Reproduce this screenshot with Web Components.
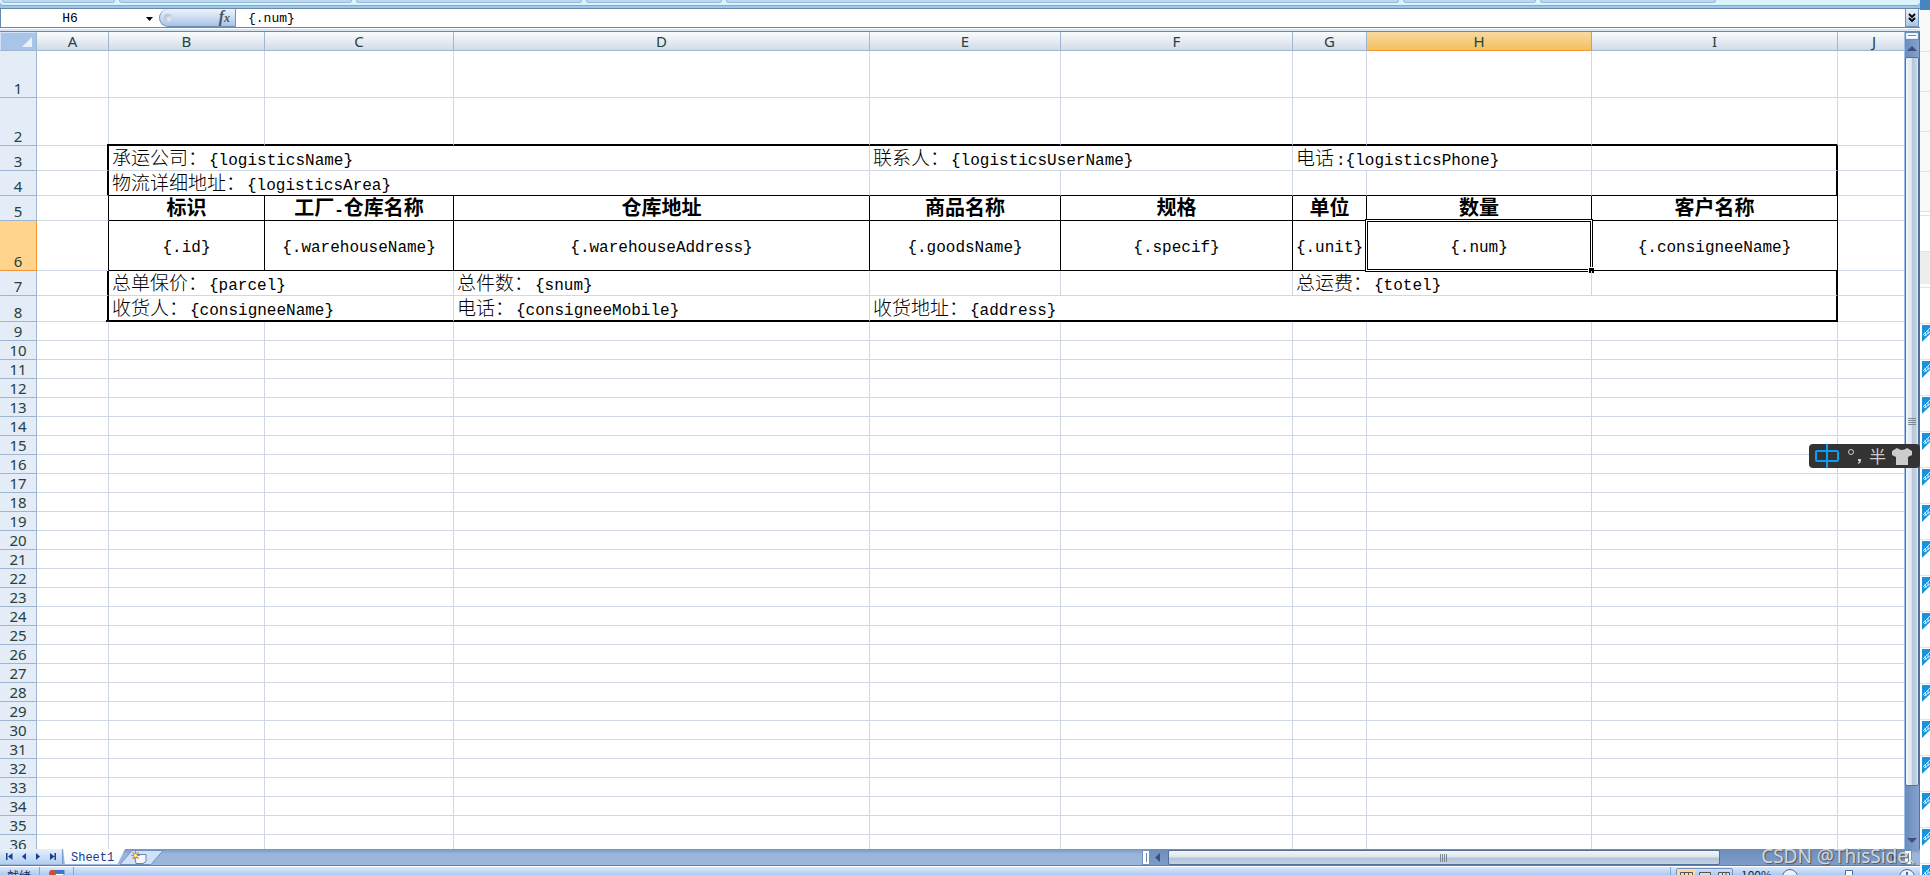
<!DOCTYPE html>
<html lang="zh-CN">
<head>
<meta charset="utf-8">
<title>Sheet1</title>
<style>
html,body{margin:0;height:100%;overflow:hidden;background:#fff}
body{font-family:"Liberation Mono","Noto Sans CJK SC",monospace}
</style>
</head>
<body>
<app-window>
  <ribbon-edge></ribbon-edge>
  <formula-bar cell="H6" formula="{.num}"></formula-bar>
  <sheet-area>
    <sheet-grid></sheet-grid>
    <v-scroll slot="scroll"></v-scroll>
  </sheet-area>
  <tab-bar><sheet-tab>Sheet1</sheet-tab></tab-bar>
  <status-bar>就绪</status-bar>
  <side-strip slot="side"></side-strip>
  <ime-bar slot="overlay"></ime-bar>
  <water-mark slot="overlay">CSDN @ThisSide、</water-mark>
</app-window>
<script>
const define = (name, html, init) => customElements.define(name, class extends HTMLElement {
  constructor() {
    super();
    const t = document.createElement('template');
    t.innerHTML = '<style>*{box-sizing:border-box}button{border:0;margin:0;padding:0;background:none;display:block}svg{display:block}</style>' + html;
    this.attachShadow({mode: 'open'}).append(t.content.cloneNode(true));
  }
  connectedCallback() { if (init) init(this, this.shadowRoot); }
});

define('app-window', `<style>
:host{display:flex;height:100vh;position:relative;overflow:hidden}
main{flex:1;min-width:0;display:flex;flex-direction:column}
</style><main><slot></slot></main><slot name="side"></slot><slot name="overlay"></slot>`);

/* Lower edge of the ribbon, with its group panels */
define('ribbon-edge', `<style>
:host{display:block;height:9px;background:#a9c2e2;border-bottom:1px solid #6689af;flex:none;box-sizing:border-box}
.panel{height:5px;display:flex;gap:4px;padding:0 2px;background:linear-gradient(#dcf1fc,#dcf4fd 60%,#c5faff);border-bottom:0;border-radius:0 0 4px 4px;box-shadow:0 1px #86a9cd}
i{height:3px;background:#bdd7ef;border:1px solid #9bbbdc;border-top:0;border-radius:0 0 3px 3px}
</style><div class="panel">
<i style="width:113px"></i><i style="width:233px"></i><i style="width:226px"></i><i style="width:136px"></i><i style="width:673px"></i><i style="width:133px"></i><i style="width:176px"></i></div>`);

define('formula-bar', `<style>
:host{display:block;flex:none;background:#d6e6f7;border-bottom:1px solid #6689af}
form{display:flex;height:19px;margin:0;background:#fff;border-bottom:1px solid #6689af;border-left:1px solid #6689af}
.gap{height:3px;border-top:1px solid #fff}
input{border:0;outline:0;background:none;padding:0;margin:0;font:13px "Liberation Mono","Noto Sans CJK SC",monospace;color:#000;height:18px}
.name{width:138px;text-align:center}
.pill{width:77px;height:18px;border:1px solid #6f93bd;border-top:0;border-radius:10px 0 0 10px;background:linear-gradient(#eef4fb,#c9daf0 55%,#a8c3e6);display:flex;align-items:center;justify-content:space-between;padding:0 5px 0 4px}
.dot{width:8px;height:8px;border-radius:50%;background:radial-gradient(circle at 65% 65%,#e9eef5,#a3aebb)}
.fx{font:italic bold 16px/16px "Liberation Serif",serif;color:#4b5561}
.fx small{font-size:12px}
.text{flex:1;padding-left:12px}
.more{width:14px;height:18px;border:1px solid #6f93bd;border-top:0;background:linear-gradient(#edf4fc,#a9c4e8);margin-right:1px}
</style>
<form><input class="name" aria-label="Name box"><button type="button" aria-label="Names" style="width:20px"><svg width="20" height="18"><path d="M7 8h7l-3.500 4z"/></svg></button>
<span class="pill"><i class="dot"></i><span class="fx">f<small>x</small></span></span>
<input class="text" aria-label="Formula"><button type="button" class="more" aria-label="Expand"><svg width="12" height="17" fill="none" stroke="#000" stroke-width="1.800"><path d="M3 5l3 3 3-3M3 9l3 3 3-3"/></svg></button></form><div class="gap"></div>`,
(el, r) => { r.querySelector('.name').value = el.getAttribute('cell'); r.querySelector('.text').value = el.getAttribute('formula'); });

define('sheet-area', `<style>
:host{display:flex;flex:1;min-height:0}
div{flex:1;min-width:0;overflow:hidden}
</style><div><slot></slot></div><slot name="scroll"></slot>`);

/* Each row: [height, class, cells]; each cell: [text, span, class] */
const E = n => Array.from({length: n}, () => ['', 1, '']);
const ROWS = [
  [47, '', E(10)],
  [48, 'above', E(10)],
  [25, 'info', [['', 1, 'wall'], ['承运公司：{logisticsName}', 3, ''], ['联系人：{logisticsUserName}', 2, ''], ['电话:{logisticsPhone}', 2, ''], ['', 1, 'wall'], ['', 1, '']]],
  [25, 'info line', [['', 1, 'wall'], ['物流详细地址：{logisticsArea}', 3, ''], ...E(4), ['', 1, 'wall'], ['', 1, '']]],
  [25, 'box line head', ['', '标识', '工厂-仓库名称', '仓库地址', '商品名称', '规格', '单位', '数量', '客户名称', ''].map(t => [t, 1, ''])],
  [50, 'box line active', ['', '{.id}', '{.warehouseName}', '{.warehouseAddress}', '{.goodsName}', '{.specif}', '{.unit}', '{.num}', '{.consigneeName}', ''].map(t => [t, 1, t === '{.num}' ? 'selected' : ''])],
  [25, 'info', [['', 1, 'wall'], ['总单保价：{parcel}', 2, ''], ['总件数：{snum}', 1, ''], ...E(2), ['总运费：{totel}', 2, ''], ['', 1, 'wall'], ['', 1, '']]],
  [26, 'info above', [['', 1, 'wall'], ['收货人：{consigneeName}', 2, ''], ['电话：{consigneeMobile}', 1, ''], ['收货地址：{address}', 5, 'wall'], ['', 1, '']]],
  ...Array.from({length: 28}, () => [19, '', E(10)])
];
define('sheet-grid', `<style>
:host{display:block}
table{width:100%;min-width:1910px;table-layout:fixed;border-collapse:separate;border-spacing:0;color:#000}
th,td{padding:0;border:0 solid #d0d7e5;border-width:0 1px 1px 0;white-space:nowrap;position:relative}
th{font:15px/17px "Noto Sans","Noto Sans CJK SC",sans-serif;color:#27413e;border-color:#9eb6ce}
thead th{background:linear-gradient(#f9fcfd,#d3dbe9);height:19px}
thead th.on{background:linear-gradient(#f9d99f,#f1c15f);border-color:#f29536}
thead th:first-child{background:#a9c4e9;box-shadow:inset 1px 1px #d3e2f6}
thead svg{position:absolute;right:4px;bottom:3px}
tbody th{background:#e4ecf7;vertical-align:bottom}
tr.active th{background:#ffd58d;border-color:#f29536}
td{font-size:16px;line-height:18px;font-weight:300}
td span{font-size:19px}
td:last-child,thead th:last-child{border-right-width:0}
.info td,.box td{padding-top:4px}
.info td{padding-left:3px}
.info td span{margin-right:2px}
.wall{border-right:2px solid #000}
.above td:not(:nth-child(2)):not(:last-child),.line td:not(:nth-child(2)):not(:last-child){border-bottom-color:#000}
.above td:not(:nth-child(2)):not(:last-child){border-bottom-width:2px}
.above td:nth-child(2)::after{content:"";position:absolute;right:-1px;bottom:-1px;width:2px;height:2px;background:#000}
.box td{text-align:center}
.box td:not(:last-child){border-right-color:#000}
.head td{font-weight:700}
.head td span{font-size:20px}
.frame{position:absolute;inset:-2px;border:1px solid #000;box-shadow:inset 0 0 0 1px #fff,inset 0 0 0 2px #000}
.frame::after{content:"";position:absolute;right:-2px;bottom:-2px;width:5px;height:5px;background:#000;outline:1px solid #fff}
</style><table><colgroup></colgroup><thead><tr></tr></thead><tbody></tbody></table>`,
(el, r) => {
  const make = (tag, cls) => { const n = document.createElement(tag); if (cls) n.className = cls; return n; };
  [37, 72, 156, 189, 416, 191, 232, 74, 225, 246, 0].forEach(w => { const c = make('col'); if (w) c.style.width = w + 'px'; r.querySelector('colgroup').append(c); });
  const head = r.querySelector('thead tr');
  const corner = make('th');
  corner.innerHTML = '<svg width="10" height="10"><path d="M10 0v10H0z" fill="#eaf1f9"/></svg>';
  head.append(corner);
  for (const l of 'ABCDEFGHIJ') { const th = make('th', l === 'H' ? 'on' : ''); th.scope = 'col'; th.textContent = l; head.append(th); }
  ROWS.forEach(([h, cls, cells], i) => {
    const tr = make('tr', cls); tr.style.height = h + 'px';
    const th = make('th'); th.scope = 'row'; th.textContent = i + 1; tr.append(th);
    for (const [text, span, c] of cells) {
      const td = make('td', c);
      if (span > 1) td.colSpan = span;
      for (const part of text.match(/[\u3000-\uffef]+|[^\u3000-\uffef]+/g) || []) {
        if (/[\u3000-\uffef]/.test(part)) { const s = make('span'); s.textContent = part; td.append(s); } else td.append(part);
      }
      if (c === 'selected') td.append(make('div', 'frame'));
      tr.append(td);
    }
    r.querySelector('tbody').append(tr);
  });
});

define('v-scroll', `<style>
:host{display:flex;flex-direction:column;flex:none;width:16px;box-sizing:border-box;border-left:1px solid #9ebfe8;border-right:1px solid #54719b;background:linear-gradient(90deg,#6a8cbc,#84a2cc)}
.split{height:8px;border:1px solid #6f93bd;background:#fff;box-shadow:inset 0 0 0 1px #dfeaf7}
.split::after{content:"";display:block;width:8px;height:1px;margin:2px auto;background:#6689af}
.thumb{flex:1;border:1px solid #54719b;border-radius:2px;background:linear-gradient(90deg,#f2f5f9,#dfe5ee 45%,#b5c5da 55%,#c4d2e3 85%,#e0e8f2);display:flex;align-items:center;justify-content:center}
.rest{height:46px}
button{height:17px}
</style><div class="split"></div><button aria-label="Scroll up"><svg width="14" height="17"><path d="M2 11l5-5 5 5z" fill="#3f4f78"/></svg></button>
<div class="thumb"><svg width="8" height="8" stroke="#7d8796"><path d="M0 .5h8M0 2.500h8M0 4.500h8M0 6.500h8"/></svg></div><div class="rest"></div>
<button aria-label="Scroll down"><svg width="14" height="17"><path d="M2 6h10l-5 5z" fill="#3f4f78"/></svg></button>`);

define('sheet-tab', `<style>
:host{display:block;position:relative}
button{height:15px;padding:1px 8px 0;font:12px/16px "Liberation Mono",monospace;color:#1a3c8c;background:linear-gradient(#fff,#f4f9ff);width:62px;text-align:left;clip-path:polygon(0 0,100% 0,88% 100%,3% 100%)}
</style><button><slot></slot></button>`);

define('tab-bar', `<style>
:host{display:flex;height:17px;flex:none;box-sizing:border-box;border-bottom:1px solid #5b7fae;background:linear-gradient(#7395c6,#9ab4da 30%,#9cb6dc)}
nav{display:flex;width:63px;height:15px;justify-content:space-between;padding:0 2px;background:linear-gradient(#e6f0fc,#b3cef0);border-right:1px solid #7a9ccb}
nav button{width:14px}
sheet-tab,slot{display:block}
.new{width:44px;margin-left:-5px}
.fill{flex:1}
.split{width:8px;border:1px solid #6f93bd;background:#fff;height:15px;margin-top:1px}
.split::after{content:"";display:block;width:1px;height:9px;margin:2px auto;background:#6689af}
.bar{display:flex;width:762px;height:16px;background:linear-gradient(#6c8dbd,#7e9cc8)}
.thumb{width:552px;height:15px;margin-top:1px;border:1px solid #54719b;border-radius:2px;background:linear-gradient(#f4f7fa,#dfe5ee 45%,#b2c2d8 55%,#c6d3e4);display:flex;align-items:center;justify-content:center}
.bar button{width:18px}
.grow{flex:1}
</style>
<nav><button aria-label="First sheet"><svg width="14" height="15" fill="#163f91"><path d="M4 4h1.500v7H4zM10.500 4v7L6 7.500z"/></svg></button>
<button aria-label="Previous sheet"><svg width="14" height="15" fill="#163f91"><path d="M9 4v7L5 7.500z"/></svg></button>
<button aria-label="Next sheet"><svg width="14" height="15" fill="#163f91"><path d="M5 4v7l4-3.500z"/></svg></button>
<button aria-label="Last sheet"><svg width="14" height="15" fill="#163f91"><path d="M4 4v7l4.500-3.500zM8.500 4H10v7H8.500z"/></svg></button></nav>
<slot></slot>
<button class="new" aria-label="Insert sheet"><svg width="44" height="15"><path d="M0 14.500L12 .5H43L31 14.500z" fill="#cfe2fa" stroke="#6f93c6"/><path d="M14 4.500h12v7l-3 2H16z" fill="#f4f8fd" stroke="#6d83ad"/><path d="M15.500 1v9M11 5.500h9M12.500 2.500l6 6M18.500 2.500l-6 6" stroke="#e08a1c" stroke-width="1.200"/><circle cx="15.500" cy="5.500" r="1.500" fill="#fff3b0"/></svg></button>
<div class="fill"></div><div class="split"></div>
<div class="bar"><button aria-label="Scroll left"><svg width="18" height="15"><path d="M10 3v9L5 7.500z" fill="#3f4f78"/></svg></button>
<div class="thumb"><svg width="8" height="8" stroke="#7d8796"><path d="M.5 0v8M2.500 0v8M4.500 0v8M6.500 0v8"/></svg></div><div class="grow"></div>
<button aria-label="Scroll right"><svg width="18" height="15"><path d="M6 3v9l5-4.500z" fill="#3f4f78"/></svg></button><div class="split"></div></div><div style="width:8px"></div>`);

define('status-bar', `<style>
:host{display:block;flex:none;height:9px;overflow:hidden;font:12px/14px "Noto Sans CJK SC",sans-serif;color:#15294f}
.in{display:flex;height:22px;border-top:1px solid #fff;background:linear-gradient(#dbe9fb,#c3daf7 4px,#a9caf3 8px,#b5d2f5)}
.label{width:40px;padding:2px 0 0 7px;border-right:1px solid #85a6d4;height:22px}
.macro{width:34px;padding:3px 0 0 9px;border-right:1px solid #85a6d4}
.grow{flex:1}
.views{display:flex;width:57px;margin-top:1px;border:1px solid #6f93c6;border-radius:2px 2px 0 0;margin-left:5px}
.zoom{padding:1px 0 0 8px;width:48px}
.right{display:flex;border-left:1px solid #85a6d4;width:250px;height:22px}
</style><div class="in"><span class="label"><slot></slot></span><span class="macro"><svg width="16" height="16"><rect x="2" y=".5" width="13" height="13" fill="#fff" stroke="#4a74b8"/><path d="M2 0h13v4H2z" fill="#3f73cc"/><path d="M7 7h7" stroke="#7e96bd"/><circle cx="3.500" cy="3.500" r="3.500" fill="#d64b2a"/></svg></span><span class="grow"></span>
<div class="right"><span class="views"><svg width="55" height="20" fill="none" stroke="#555"><path d="M0 0h18v20H0z" fill="#ffd9a0" stroke="none"/><path d="M3.500 3.500h12v9h-12zM3.500 7h12M7.500 3v9M11.500 3v9"/><path d="M22.500 3.500h11v12h-11z" fill="#ddd"/><path d="M25.500 6.500h5v6h-5z" fill="#fff"/><path d="M41.500 3.500h11v12h-11zM45.500 3v12M49 3v12" fill="#ddd"/></svg></span>
<span class="zoom">100%</span><svg width="134" height="20" fill="none" stroke="#4a6da5"><circle cx="9" cy="10" r="7.500" fill="#e9f2fd"/><path d="M5 10h8M18 10h100"/><path d="M64.500 3.500h7v11h-7z" fill="#fff"/><circle cx="126" cy="10" r="7.500" fill="#e9f2fd"/><path d="M122 10h8M126 5v9" stroke-width="2"/></svg></div></div>`);

/* Sliver of the window behind, to the right */
define('side-strip', `<style>
:host{display:block;flex:none;width:10px;overflow:hidden;background:#fff}
.blue{height:10px;background:#4585c2}
.top{height:42px;background:#f9f9f9;border-bottom:1px solid #e2e2e2}
.row{height:40px;background:#f9f9f9;border-bottom:1px solid #e2e2e2}
.thin{height:4px;border-bottom:1px solid #e2e2e2}
.white{height:36px;border-bottom:1px solid #e2e2e2}
.grey{height:32px;background:#ededed}
.end{height:4px;border-bottom:1px solid #e2e2e2}
.item{height:36px;padding:1px 0 0 2px;border-bottom:1px solid #e2e2e2}
</style><div class="blue"></div><div class="top"></div><div class="row"></div><div class="row"></div><div class="row"></div><div class="row"></div><div class="thin"></div><div class="white"></div><div class="grey"></div><div class="end"></div><div class="white"></div><div class="items"></div>`,
(el, r) => { r.querySelector('.items').innerHTML = '<div class="item"><svg width="8" height="17"><path d="M0 0h8v9L0 17z" fill="#1a93dc"/><path d="M1 10l7-7M2 11l6-4M3 7l1 4M6 5v4" stroke="#d5efff" fill="none"/></svg></div>'.repeat(16); });

define('ime-bar', `<style>
:host{display:flex;position:absolute;right:10px;top:444px;width:111px;height:24px;box-sizing:border-box;border-radius:4px;background:#333;color:#ccc;align-items:center;font:17px/24px "Noto Sans CJK SC",sans-serif}
.z{margin-left:6px}.p{width:30px;padding-left:8px}.h{width:22px}
</style><svg class="z" width="24" height="24" role="img" aria-label="中" fill="none" stroke="#0d9df0" stroke-width="2"><rect x="1" y="7" width="22" height="10" rx="1"/><path d="M12 0v24"/></svg>
<svg class="p" width="30" height="24" fill="none" stroke="#ccc"><circle cx="4" cy="8" r="2.500"/><path d="M11 15h3v2q0 2-3 3v-1q1-1 1-2h-1z" fill="#ccc" stroke="none"/></svg>
<span class="h">半</span><svg width="22" height="24" fill="#ccc"><path d="M6 4q5 4 10 0l5 3 0 4-4 2v8H5v-8l-4-2 0-4z"/></svg>`);

define('water-mark', `<style>
:host{display:block;position:absolute;right:3px;bottom:7px;font:19px/24px "Noto Sans","Noto Sans CJK SC",sans-serif;color:#d3d7dc;text-shadow:1px 1px 1px #555;white-space:nowrap;pointer-events:none}
</style><slot></slot>`);
</script>
</body>
</html>
